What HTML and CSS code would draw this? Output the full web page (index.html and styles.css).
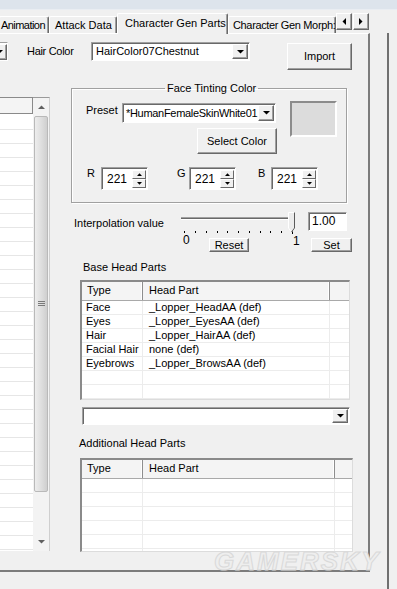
FILE: index.html
```html
<!DOCTYPE html>
<html>
<head>
<meta charset="utf-8">
<link rel="stylesheet" href="styles.css">
</head>
<body>
<div class="titlestrip"></div>
<div class="tabbar">
  <div class="tab t-anim">Animation</div>
  <div class="tab t-attack">Attack Data</div>
  <div class="tab t-sel">Character Gen Parts</div>
  <div class="tab t-morph">Character Gen Morph:</div>
  <div class="tabarrows">
    <div class="btn arrbtn"><svg width="4" height="7" viewBox="0 0 4 7"><path d="M4 0V7L0.5 3.5Z"/></svg></div>
    <div class="btn arrbtn"><svg width="4" height="7" viewBox="0 0 4 7"><path d="M0 0V7L3.5 3.5Z"/></svg></div>
  </div>
</div>
<div class="main">
  <div class="panel">
    <div class="row1">
      <div class="stub"><div class="ddbtn stubbtn"><svg width="7" height="4" viewBox="0 0 7 4"><path d="M0 0H7L3.5 3.6Z"/></svg></div></div>
      <div class="lbl haircolor-lbl">Hair Color</div>
      <div class="combo hair"><div class="val">HairColor07Chestnut</div><div class="ddbtn"><svg width="7" height="4" viewBox="0 0 7 4"><path d="M0 0H7L3.5 3.6Z"/></svg></div></div>
      <div class="btn import">Import</div>
    </div>
    <div class="body">
      <div class="leftlist">
        <div class="ll-main">
          <div class="ll-head"></div>
          <div class="ll-rows">
            <div class="lr"></div><div class="lr"></div><div class="lr"></div><div class="lr"></div><div class="lr"></div>
            <div class="lr"></div><div class="lr"></div><div class="lr"></div><div class="lr"></div><div class="lr"></div>
            <div class="lr"></div><div class="lr"></div><div class="lr"></div><div class="lr"></div><div class="lr"></div>
            <div class="lr"></div><div class="lr"></div><div class="lr"></div><div class="lr"></div><div class="lr"></div>
            <div class="lr"></div><div class="lr"></div><div class="lr"></div><div class="lr"></div><div class="lr"></div>
            <div class="lr"></div><div class="lr"></div><div class="lr"></div><div class="lr"></div><div class="lr"></div>
            <div class="lr"></div><div class="lr"></div>
          </div>
        </div>
        <div class="ll-scroll">
          <div class="sb-arrow"><svg width="7" height="4" viewBox="0 0 7 4"><path d="M0 4H7L3.5 0.4Z"/></svg></div>
          <div class="sb-thumb"><svg width="7" height="6" viewBox="0 0 7 6"><path d="M0 0.5H7M0 2.5H7M0 4.5H7" stroke="#7a7a7a" stroke-width="1"/></svg></div>
          <div class="sb-track"></div>
          <div class="sb-arrow"><svg width="7" height="4" viewBox="0 0 7 4"><path d="M0 0H7L3.5 3.6Z"/></svg></div>
        </div>
      </div>
      <div class="form">
        <fieldset class="tint">
          <legend>Face Tinting Color</legend>
          <div class="tint-top">
            <div class="tint-left">
              <div class="preset-row">
                <div class="lbl preset-lbl">Preset</div>
                <div class="combo preset"><div class="val">*HumanFemaleSkinWhite01</div><div class="ddbtn"><svg width="7" height="4" viewBox="0 0 7 4"><path d="M0 0H7L3.5 3.6Z"/></svg></div></div>
              </div>
              <div class="btn select">Select Color</div>
            </div>
            <div class="swatch"></div>
          </div>
          <div class="rgb">
            <div class="lbl rl">R</div>
            <div class="spin"><div class="num">221</div><div class="spinbtns"><div class="sbtn"><svg width="5" height="3" viewBox="0 0 5 3"><path d="M0 3H5L2.5 0.3Z"/></svg></div><div class="sbtn"><svg width="5" height="3" viewBox="0 0 5 3"><path d="M0 0H5L2.5 2.7Z"/></svg></div></div></div>
            <div class="lbl gl">G</div>
            <div class="spin"><div class="num">221</div><div class="spinbtns"><div class="sbtn"><svg width="5" height="3" viewBox="0 0 5 3"><path d="M0 3H5L2.5 0.3Z"/></svg></div><div class="sbtn"><svg width="5" height="3" viewBox="0 0 5 3"><path d="M0 0H5L2.5 2.7Z"/></svg></div></div></div>
            <div class="lbl bl">B</div>
            <div class="spin"><div class="num">221</div><div class="spinbtns"><div class="sbtn"><svg width="5" height="3" viewBox="0 0 5 3"><path d="M0 3H5L2.5 0.3Z"/></svg></div><div class="sbtn"><svg width="5" height="3" viewBox="0 0 5 3"><path d="M0 0H5L2.5 2.7Z"/></svg></div></div></div>
          </div>
        </fieldset>

        <div class="interp-a">
          <div class="lbl interp-lbl">Interpolation value</div>
          <div class="slider">
            <div class="track"></div>
            <svg class="ticks" width="114" height="3" viewBox="0 0 114 3">
              <path d="M3.5 0V2M14.5 0V2M25.5 0V2M36.5 0V2M46.5 0V2M57.5 0V2M68.5 0V2M79.5 0V2M89.5 0V2M100.5 0V2M111.5 0V3" stroke="#000" stroke-width="1"/>
            </svg>
            <svg class="thumb" width="8" height="21" viewBox="0 0 8 21">
              <path d="M0.5 0.5H6.5V16L3.5 20L0.5 16Z" fill="#ececec" stroke="#fff"/>
              <path d="M6.5 0.5V16L3.5 20" fill="none" stroke="#5a5a5a"/>
            </svg>
          </div>
          <div class="textbox">1.00</div>
        </div>
        <div class="interp-b">
          <div class="lbl zero">0</div>
          <div class="btn small reset">Reset</div>
          <div class="lbl one">1</div>
          <div class="btn small set">Set</div>
        </div>

        <div class="lbl sect base-lbl">Base Head Parts</div>
        <div class="list base">
          <div class="lhead"><div class="c1">Type</div><div class="c2">Head Part</div><div class="c3"></div></div>
          <div class="lrow"><div class="c1">Face</div><div class="c2">_Lopper_HeadAA (def)</div><div class="c3"></div></div>
          <div class="lrow"><div class="c1">Eyes</div><div class="c2">_Lopper_EyesAA (def)</div><div class="c3"></div></div>
          <div class="lrow"><div class="c1">Hair</div><div class="c2">_Lopper_HairAA (def)</div><div class="c3"></div></div>
          <div class="lrow"><div class="c1">Facial Hair</div><div class="c2">none (def)</div><div class="c3"></div></div>
          <div class="lrow"><div class="c1">Eyebrows</div><div class="c2">_Lopper_BrowsAA (def)</div><div class="c3"></div></div>
          <div class="lrow"><div class="c1"></div><div class="c2"></div><div class="c3"></div></div>
          <div class="lrow"><div class="c1"></div><div class="c2"></div><div class="c3"></div></div>
        </div>
        <div class="combo wide"><div class="val"></div><div class="ddbtn"><svg width="7" height="4" viewBox="0 0 7 4"><path d="M0 0H7L3.5 3.6Z"/></svg></div></div>

        <div class="lbl sect add-lbl">Additional Head Parts</div>
        <div class="list add">
          <div class="lhead"><div class="c1">Type</div><div class="c2">Head Part</div><div class="c3"></div></div>
          <div class="lrow"><div class="c1"></div><div class="c2"></div><div class="c3"></div></div>
          <div class="lrow"><div class="c1"></div><div class="c2"></div><div class="c3"></div></div>
          <div class="lrow"><div class="c1"></div><div class="c2"></div><div class="c3"></div></div>
          <div class="lrow"><div class="c1"></div><div class="c2"></div><div class="c3"></div></div>
          <div class="lrow"><div class="c1"></div><div class="c2"></div><div class="c3"></div></div>
          <div class="lrow"><div class="c1"></div><div class="c2"></div><div class="c3"></div></div>
        </div>
      </div>
    </div>
  </div>
  <div class="gapcol"></div>
  <div class="outerline"></div>
</div>
<div class="watermark">GAMERSKY</div>
</body>
</html>
```

FILE: styles.css
```css
* { box-sizing: border-box; }
html, body { margin: 0; padding: 0; }
body {
  width: 397px;
  height: 589px;
  overflow: hidden;
  position: relative;
  background: #f0f0f0;
  color: #000;
  font-family: "Liberation Sans", Arial, sans-serif;
  font-size: 11px;
  line-height: 13px;
}

/* strip at the very top */
.titlestrip { height: 10px; background: #dde4ec; border-bottom: 1px solid #e9edf2; }

/* tabs */
.tabbar { height: 23px; display: flex; align-items: flex-end; position: relative; z-index: 2; }
.tab {
  flex: none;
  height: 17px;
  line-height: 17px;
  white-space: nowrap;
  overflow: hidden;
  background: #f0f0f0;
  border-top: 1px solid #fff;
  border-left: 1px solid #fff;
  border-right: 1px solid #696969;
  box-shadow: inset -1px 0 #a0a0a0;
  border-radius: 2px 2px 0 0;
}
.t-anim { width: 50px; margin-left: -1px; padding-left: 1px; letter-spacing: -0.55px; }
.t-attack { width: 68px; padding-left: 5px; }
.t-sel { width: 111px; height: 21px; line-height: 18px; margin-bottom: -1px; padding-left: 7px; }
.t-morph { width: 108px; padding-left: 4px; letter-spacing: -0.35px; }
.tabarrows { align-self: flex-start; margin-top: 3px; display: flex; gap: 1px; }
.arrbtn { width: 16px; height: 17px; }

/* generic controls */
.btn {
  display: flex;
  align-items: center;
  justify-content: center;
  background: #f0f0f0;
  border: 1px solid;
  border-color: #fff #696969 #696969 #fff;
  box-shadow: inset -1px -1px #a0a0a0;
  flex: none;
}
.combo {
  display: flex;
  background: #fff;
  border: 1px solid;
  border-color: #a0a0a0 #fff #fff #a0a0a0;
  box-shadow: inset 1px 1px #696969;
  padding: 1px 1px 1px 1px;
  flex: none;
}
.combo .val { flex: 1; padding-left: 3px; white-space: nowrap; overflow: hidden; display: flex; align-items: center; }
.ddbtn {
  width: 16px;
  flex: none;
  display: flex;
  align-items: center;
  justify-content: center;
  background: #f0f0f0;
  border: 1px solid;
  border-color: #fff #696969 #696969 #fff;
  box-shadow: inset -1px -1px #a0a0a0;
}
.lbl { flex: none; white-space: nowrap; }

/* main area */
.main { display: flex; height: 556px; }
.panel {
  flex: none;
  width: 370px;
  height: 539px;
  border-top: 1px solid #fff;
  border-right: 2px solid #7c7c7c;
  border-bottom: 2px solid #7c7c7c;
}
.gapcol { width: 17px; flex: none; }
.outerline { width: 2px; flex: none; background: #707070; }

/* first row */
.row1 { display: flex; align-items: flex-start; margin-top: 8px; height: 28px; }
.stub {
  width: 8px; height: 19px; overflow: hidden; display: flex; justify-content: flex-end;
  background: #fff; border-top: 1px solid #a0a0a0; border-bottom: 1px solid #fff; border-right: 1px solid #fff;
  padding: 1px 0 0 0;
}
.stubbtn { height: 16px; }
.haircolor-lbl { margin-left: 19px; width: 64px; line-height: 19px; letter-spacing: -0.3px; }
.combo.hair { width: 159px; height: 19px; }
.btn.import { width: 65px; height: 27px; margin-left: 37px; margin-top: 1px; }

.body { display: flex; align-items: flex-start; }

/* left list */
.leftlist { flex: none; display: flex; width: 50px; height: 454px; margin-top: 27px; }
.ll-main { width: 33px; background: #fff; overflow: hidden; }
.ll-head { height: 17px; margin-left: -1px; background: #f4f4f4; border: 1px solid #8a8a8a; }
.ll-rows { padding-top: 2px; }
.lr { height: 14px; border-bottom: 1px solid #e6e6e6; }
.ll-scroll { width: 17px; display: flex; flex-direction: column; background: #f3f3f3; border-top: 1px solid #9a9a9a; border-right: 1px solid #cfcfcf; padding: 0 1px; }
.sb-arrow { height: 18px; display: flex; align-items: center; justify-content: center; fill: #606060; }
.sb-thumb {
  height: 376px;
  border: 1px solid #b9b9b9;
  border-radius: 2px;
  background: linear-gradient(to right, #ededed, #dcdcdc 60%, #cfcfcf);
  display: flex; align-items: center; justify-content: center;
}
.sb-track { flex: 1; }

/* form column */
.form { flex: none; margin-left: 21px; margin-top: 11px; width: 282px; }
.tint {
  margin: 0;
  padding: 0 0 12px 0;
  width: 276px;
  min-width: 0;
  border: 1px solid #a0a0a0;
  box-shadow: 1px 1px 0 #fff, inset 1px 1px 0 #fff;
}
.tint legend { margin-left: 93px; padding: 0 2px; line-height: 14px; }
.tint-top { display: flex; align-items: flex-start; margin-top: 6px; padding-left: 14px; }
.tint-left { width: 190px; margin-top: 2px; }
.preset-row { display: flex; }
.preset-lbl { width: 36px; line-height: 15px; }
.combo.preset { width: 154px; height: 20px; }
.combo.preset .val { letter-spacing: -0.3px; padding-left: 2px; }
.btn.select { width: 80px; height: 26px; margin-top: 5px; margin-left: 111px; }
.swatch {
  flex: none; margin-left: 14px; width: 47px; height: 36px;
  background: #dcdcdc; border: 2px solid; border-color: #8c8c8c #fff #fff #8c8c8c;
}

.rgb { display: flex; align-items: flex-start; margin-top: 13px; padding-left: 15px; }
.rl { width: 14px; }
.gl { width: 12px; margin-left: 29px; }
.bl { width: 13px; margin-left: 22px; }
.spin {
  flex: none; width: 47px; height: 23px; display: flex; background: #fff;
  border: 1px solid; border-color: #a0a0a0 #fff #fff #a0a0a0; box-shadow: inset 1px 1px #696969;
  padding: 2px 1px 1px 1px;
}
.spin .num { flex: 1; padding-left: 4px; line-height: 18px; font-size: 12px; }
.spinbtns { width: 14px; display: flex; flex-direction: column; }
.sbtn {
  flex: 1; display: flex; align-items: center; justify-content: center; background: #f0f0f0;
  border: 1px solid; border-color: #fff #696969 #696969 #fff;
}

/* interpolation */
.interp-a { display: flex; align-items: flex-start; margin-top: 9px; height: 19px; }
.interp-lbl { width: 110px; padding-left: 3px; padding-top: 4px; line-height: 14px; }
.slider { position: relative; width: 114px; height: 19px; flex: none; }
.track { margin-top: 5px; margin-right: 2px; height: 3px; border-top: 1px solid #a0a0a0; background: #696969; border-bottom: 1px solid #fff; }
.ticks { position: absolute; left: 0; top: 19px; }
.thumb { position: absolute; left: 107px; top: 0; }
.textbox {
  flex: none; margin-left: 13px; width: 39px; height: 19px; background: #fff; padding-left: 3px;
  border: 1px solid; border-color: #a0a0a0 #fff #fff #a0a0a0; box-shadow: inset 1px 1px #696969;
  line-height: 17px; font-size: 12px;
}
.interp-b { display: flex; align-items: flex-start; margin-top: 7px; height: 14px; }
.zero { margin-left: 112px; width: 26px; margin-top: -4px; font-size: 12px; }
.btn.small { height: 14px; line-height: 12px; }
.reset { width: 40px; }
.one { margin-left: 44px; width: 18px; margin-top: -3px; font-size: 12px; }
.set { width: 41px; }

.sect { line-height: 14px; }
.base-lbl { margin-top: 8px; padding-left: 12px; }
.add-lbl { margin-top: 11px; padding-left: 8px; }

/* list views */
.list {
  overflow: hidden; background: #fff;
  border-top: 2px solid #8a8a8a; border-left: 2px solid #8a8a8a;
  border-right: 1px solid #dcdcdc; border-bottom: 1px solid #dcdcdc;
}
.list.base { margin-top: 6px; margin-left: 9px; width: 270px; height: 120px; }
.list.add { margin-top: 8px; margin-left: 9px; width: 273px; height: 94px; }
.lhead { display: flex; height: 19px; background: #f4f4f4; border-bottom: 1px solid #a9a9a9; }
.lhead > div { line-height: 17px; border-right: 1px solid #8e8e8e; box-shadow: inset -1px 0 #fff; }
.lhead .c1 { padding-left: 5px; }
.lhead .c2 { padding-left: 6px; }
.lhead .c3 { border-right: none; box-shadow: none; }
.lrow { display: flex; height: 14px; border-bottom: 1px solid #ececec; }
.lrow > div { line-height: 13px; white-space: nowrap; overflow: hidden; border-right: 1px solid #ececec; }
.lrow .c1 { padding-left: 4px; }
.lrow .c2 { padding-left: 6px; }
.lrow .c3 { border-right: none; }
.c1 { width: 61px; flex: none; }
.c3 { flex: 1; }
.base .c2 { width: 187px; flex: none; }
.add .c2 { width: 192px; flex: none; }

.combo.wide { margin-top: 7px; margin-left: 11px; width: 268px; height: 18px; }

/* watermark overlay */
.watermark {
  position: absolute; left: 214px; top: 548px;
  font-family: "Liberation Sans", Arial, sans-serif;
  font-size: 26px; line-height: 26px; font-weight: bold; font-style: italic;
  letter-spacing: 2px;
  color: #eeeeee;
  -webkit-text-stroke: 1px #d9d9d9;
}
```
